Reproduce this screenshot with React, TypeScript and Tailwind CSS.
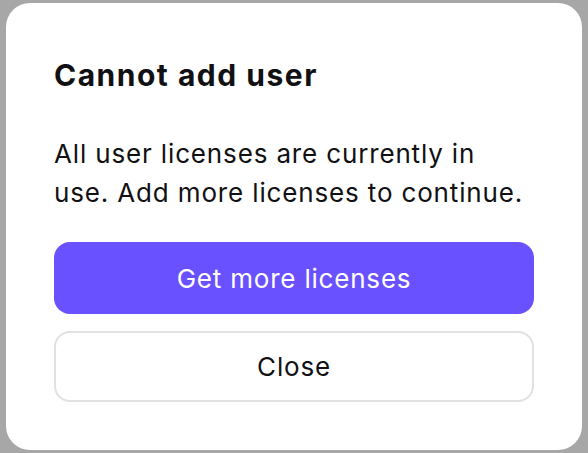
import React from 'react';

const App: React.FC = () => {
    return (
        <div className="min-h-screen w-full bg-[#a7a7a7] flex items-center justify-center" style={{ fontFamily: 'Inter, "Noto Sans", sans-serif' }}>
            <div className="w-[576px] h-[447px] bg-white rounded-[24px] px-12 pt-[54px] pb-12 flex flex-col">
                <h2 className="text-[30px] leading-[36px] font-bold tracking-[1.5px] text-[#111114]">Cannot add user</h2>
                <p className="mt-[41px] text-[26px] leading-[39px] tracking-[0.85px] text-[#111114]">
                    All user licenses are currently in use. Add more licenses to continue.
                </p>
                <div className="mt-auto flex flex-col gap-[17px]">
                    <button className="h-[72px] w-full rounded-[16px] bg-[#6a51ff] text-white text-[26px] tracking-[0.8px]">
                        Get more licenses
                    </button>
                    <button className="h-[71px] w-full rounded-[16px] border-2 border-[#e2e0e0] bg-white text-[#111114] text-[26px] tracking-[0.8px]">
                        Close
                    </button>
                </div>
            </div>
        </div>
    );
};

export default App;
